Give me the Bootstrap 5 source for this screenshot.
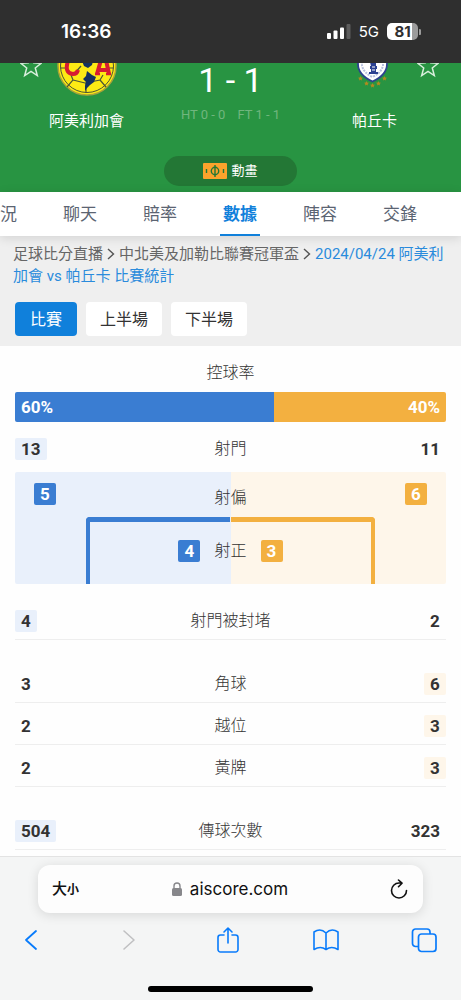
<!DOCTYPE html>
<html lang="zh-Hant">
<head>
<meta charset="utf-8">
<meta name="viewport" content="width=device-width, initial-scale=1">
<title>AiScore</title>
<link href="https://cdn.jsdelivr.net/npm/bootstrap@5.3.0/dist/css/bootstrap.min.css" rel="stylesheet">
<style>
  :root { --home: #3a7dd2; --away: #f3b040; --home-soft: #e9f0fb; --away-soft: #fef6ea; --link: #1080db; }
  body { font-family: Roboto, "Noto Sans CJK TC", sans-serif; font-size: 16px; line-height: 22px; color: #333; background: #fefefe; }
  svg { display: block; flex: none; }
  .ios { font-family: Inter, "Noto Sans CJK TC", sans-serif; }

  .status-bar { height: 63px; background: #2f2f2f; color: #fff; padding: 0 40px 0 61px; }
  .clock { font-size: 19px; font-weight: 600; }
  .network { font-size: 15px; }
  .battery { width: 31px; height: 17px; border-radius: 5px; background: linear-gradient(90deg, #fff 81%, #9b9b9b 81%); color: #2f2f2f; font-size: 15px; line-height: 17px; font-weight: 700; }

  .match-head { background: #289442; color: #fff; padding-bottom: 6px; }
  .side { flex: 1 1 0; font-size: 15px; }
  .crest-row { display: grid; grid-template-columns: 1fr 60px 1fr; height: 47px; }
  .crest-row .star { justify-self: end; margin-right: 15px; }
  .crest-row .star.right { justify-self: start; margin: 0 0 0 12px; }
  .middle { width: 115px; }
  .score { font-size: 34px; line-height: 34px; font-weight: 400; }
  .periods { font-size: 13px; line-height: 16px; color: #70b67e; margin-top: 10px; }
  .anim { width: 133px; height: 30px; border-radius: 15px; border: 0; background: #237735; color: #fff; font-size: 13px; margin-top: 24px; }

  .tab-strip { height: 44px; background: #fff; box-shadow: 0 2px 10px rgba(0,0,0,.12); overflow: hidden; font-size: 17px; position: relative; z-index: 1; }
  .tab-strip a { flex: 0 0 80px; line-height: 45px; text-align: center; text-decoration: none; color: #5b6472; position: relative; }
  .tab-strip a.first { flex-basis: 40px; text-align: left; }
  .tab-strip a.current { color: var(--link); font-weight: 700; }
  .tab-strip a.current::after { content: ""; position: absolute; left: 20px; right: 20px; bottom: 0; height: 2px; background: var(--link); }

  .filters { background: #efefef; padding: 7px 13px 10px; }
  .crumbs { font-size: 15px; line-height: 22px; color: #666; margin-bottom: 15px; }
  .crumbs a { color: inherit; text-decoration: none; }
  .crumbs a.here { color: #2a8bdc; }
  .crumbs svg { display: inline-block; margin: 0 4px; vertical-align: -1px; }
  .filter-row { gap: 9px; padding-left: 2px; }
  .filters .btn { --bs-btn-border-radius: 4px; --bs-btn-border-width: 0; --bs-btn-bg: #fff; --bs-btn-color: #333; height: 34px; padding: 2px 15px 0; font-size: 16px; line-height: 22px; }
  .filters .btn:not(.active) { padding: 2px 14px 0; }
  .filters .btn.active { --bs-btn-active-bg: var(--link); --bs-btn-active-color: #fff; }

  .stats { padding: 16px 15px 0; }
  .stat-name { font-weight: 300; }
  .possession { height: 30px; border-radius: 2px; overflow: hidden; color: #fff; font-size: 17px; font-weight: 700; line-height: 30px; margin: 8px 0 4px; }
  .possession > div { padding: 0 6px; }
  .bg-home { background: var(--home); }
  .bg-away { background: var(--away); }
  .stat { display: grid; grid-template-columns: 1fr auto 1fr; padding: 12px 0 7px; border-bottom: 1px solid #eee; }
  .stat.plain { border-color: transparent; }
  .stat.gap-after { margin-bottom: 21px; }
  .num { font-size: 17px; font-weight: 700; line-height: 23px; height: 22px; min-width: 22px; padding: 0 6px; border-radius: 2px; justify-self: start; text-align: center; }
  .num.r { justify-self: end; }
  .num.h { background: var(--home-soft); }
  .num.a { background: var(--away-soft); }
  .num.solid { color: #fff; }
  .pitch { height: 112px; border-radius: 2px; margin: 4px 0 14px; background: linear-gradient(90deg, var(--home-soft) 50%, var(--away-soft) 50%); }
  .wide { display: grid; grid-template-columns: 1fr auto 1fr; height: 45px; padding: 11px 19px 0; }
  .wide > span { padding-top: 4px; }
  .goal { width: 67%; height: 67px; margin: 0 auto; position: relative; gap: 14px; }
  .goal::before, .goal::after { content: ""; position: absolute; top: 0; bottom: 0; width: 50%; border: 0 solid var(--home); border-top-width: 5px; }
  .goal::before { left: 0; border-left-width: 4px; border-top-left-radius: 4px; }
  .goal::after { right: 0; border-color: var(--away); border-right-width: 4px; border-top-right-radius: 4px; }

  .browser-bar { background: #f4f5f5; border-top: 1px solid #e3e3e3; padding: 8px 0; height: 144px; color: #111; z-index: 2; }
  .address { margin: 0 38px; height: 48px; border-radius: 12px; background: #fdfdfd; box-shadow: 0 2px 12px rgba(0,0,0,.12); padding: 0 15px 0 14px; display: grid; grid-template-columns: 1fr auto 1fr; align-items: center; }
  .browser-bar button { border: 0; padding: 0; background: none; color: #087bfb; }
  .browser-bar .address button { color: #111; }
  .size-btn { font-size: 15px; font-weight: 500; }
  .size-btn small { font-size: 12px; font-weight: 700; }
  .host { font-size: 17px; }
  .tools { padding: 13px 23px 0 17px; }
  .tools button { width: 28px; }
  .tools svg { margin: 0 auto; }
  .home-line { width: 165px; height: 6px; border-radius: 3px; background: #000; margin: 32px auto 0; }
</style>
</head>
<body>
<div class="d-flex flex-column min-vh-100">

  <div class="status-bar ios d-flex align-items-center justify-content-between">
    <span class="clock">16:36</span>
    <div class="d-flex align-items-center">
      <svg width="24" height="15" viewBox="0 0 24 15" fill="#fff"><rect x="0" y="9" width="4" height="6" rx="1"/><rect x="6.500" y="6.500" width="4" height="8.500" rx="1"/><rect x="13" y="3.500" width="4" height="11.500" rx="1"/><rect x="19.500" y="0" width="4" height="15" rx="1" fill="#5d5d5d"/></svg>
      <span class="network ms-2 me-2">5G</span>
      <span class="battery text-center">81</span>
      <svg width="3" height="6" viewBox="0 0 3 6"><path d="M1 0a3 3 0 0 1 0 6z" fill="#9b9b9b"/></svg>
    </div>
  </div>

  <header class="match-head">
    <div class="d-flex justify-content-center">
      <div class="side text-center">
        <div class="crest-row">
          <svg class="star" width="22" height="15" viewBox="0 9 22 15" fill="none" stroke="#d9efdd" stroke-width="1.500"><path d="M11 1.500l2.700 7.400 7.500.4-5.900 4.700 2 7.500-6.300-4.200-6.300 4.200 2-7.500L.8 9.300l7.500-.4z"/></svg>
          <svg width="60" height="33" viewBox="0 27 60 33">
            <circle cx="30" cy="30" r="29" fill="#fdea14" stroke="#a9a33a" stroke-width="1.500"/>
            <circle cx="30" cy="30" r="26.500" fill="none" stroke="#4b5537"/>
            <path d="M3 32h6M57 32h-6M10 51l6-7-2-5M16 44l12 3 15-3 3-5M43 44l6 7M29 47v10M18 37l6-7" fill="none" stroke="#4b5537" stroke-width="1.200"/>
            <path d="M25 25h11l-1 4-4 3-4-2zM30 35l5 4 4 2-2 5-4 3-3 3-2 3 0-5 1-4-3-3 3-3z" fill="#15315f"/>
            <path d="M11 25q-4 12 5 13 4 0 5-4M40 38l4-14h5l3 14M42 34h9" fill="none" stroke="#d71b32" stroke-width="4"/>
            <path d="M38 38h5M49 38h5" stroke="#d71b32" stroke-width="2.500"/>
          </svg>
        </div>
        <div>阿美利加會</div>
      </div>
      <div class="middle text-center text-nowrap">
        <div class="score">1 - 1</div>
        <div class="periods d-flex justify-content-center gap-2"><span>HT 0 - 0</span> <span class="ps-1">FT 1 - 1</span></div>
      </div>
      <div class="side text-center">
        <div class="crest-row">
          <span></span>
          <svg width="60" height="33" viewBox="0 27 60 33">
            <path d="M13 16h29v12q0 11-14.500 17.500Q13 39 13 28z" fill="#fff" stroke="#2d428e" stroke-width="1.800"/>
            <path d="M17 16h21v14q-2 7-10.500 11-8.500-4-10.500-11z" fill="none" stroke="#b9c2df" stroke-width="2" stroke-dasharray="2 1"/>
            <path d="M25 26h6v4h1v3h-1v3h2v2h-9v-2h2v-3h-1v-3h1z" fill="#2b4191"/><path d="M27 31h3M27 34h3" stroke="#fff"/>
            <g fill="#b28a20"><path id="gold" d="M27.500 47l.7 1.500 1.700.2-1.200 1.200.3 1.700-1.500-.8-1.500.8.3-1.700-1.200-1.200 1.700-.2z"/><use href="#gold" x="-6" y="-2"/><use href="#gold" x="-12" y="-7"/><use href="#gold" x="6" y="-2"/><use href="#gold" x="12" y="-7"/></g>
          </svg>
          <svg class="star right" width="22" height="15" viewBox="0 9 22 15" fill="none" stroke="#d9efdd" stroke-width="1.500"><path d="M11 1.500l2.700 7.400 7.500.4-5.900 4.700 2 7.500-6.300-4.200-6.300 4.200 2-7.500L.8 9.300l7.500-.4z"/></svg>
        </div>
        <div>帕丘卡</div>
      </div>
    </div>
    <button type="button" class="anim d-flex align-items-center justify-content-center mx-auto gap-1">
      <svg width="24" height="16" viewBox="0 0 24 16"><rect width="24" height="16" rx="1" fill="#fba32c"/><g fill="none" stroke="#237735" stroke-width="1.400"><circle cx="12" cy="8" r="3.700"/><path d="M12 2v12M3.500 6v4M20.500 6v4"/></g></svg>
      動畫
    </button>
  </header>

  <nav class="tab-strip d-flex text-nowrap">
    <a href="#" class="first">況</a>
    <a href="#">聊天</a>
    <a href="#">賠率</a>
    <a href="#" class="current">數據</a>
    <a href="#">陣容</a>
    <a href="#">交鋒</a>
  </nav>

  <section class="filters">
    <nav class="crumbs"><a href="#">足球比分直播</a><svg width="8" height="12" viewBox="0 0 8 12" fill="none" stroke="#555" stroke-width="1.400"><path d="M1 1l5.500 5L1 11"/></svg><a href="#">中北美及加勒比聯賽冠軍盃</a><svg width="8" height="12" viewBox="0 0 8 12" fill="none" stroke="#555" stroke-width="1.400"><path d="M1 1l5.500 5L1 11"/></svg><a href="#" class="here">2024/04/24 阿美利加會 vs 帕丘卡 比賽統計</a></nav>
    <div class="filter-row d-flex">
      <button type="button" class="btn active">比賽</button>
      <button type="button" class="btn">上半場</button>
      <button type="button" class="btn">下半場</button>
    </div>
  </section>

  <main class="stats">
    <div class="stat-name text-center">控球率</div>
    <div class="possession d-flex">
      <div class="bg-home" style="width:60%">60%</div>
      <div class="bg-away text-end" style="width:40%">40%</div>
    </div>
    <div class="stat plain"><div class="num h">13</div><span class="stat-name">射門</span><div class="num r">11</div></div>
    <div class="pitch">
      <div class="wide"><div class="num solid bg-home">5</div><span class="stat-name">射偏</span><div class="num r solid bg-away">6</div></div>
      <div class="goal d-flex align-items-center justify-content-center">
        <div class="num solid bg-home">4</div><span class="stat-name">射正</span><div class="num solid bg-away">3</div>
      </div>
    </div>
    <div class="stat gap-after"><div class="num h">4</div><span class="stat-name">射門被封堵</span><div class="num r">2</div></div>
    <div class="stat"><div class="num">3</div><span class="stat-name">角球</span><div class="num r a">6</div></div>
    <div class="stat"><div class="num">2</div><span class="stat-name">越位</span><div class="num r a">3</div></div>
    <div class="stat gap-after"><div class="num">2</div><span class="stat-name">黃牌</span><div class="num r a">3</div></div>
    <div class="stat"><div class="num h">504</div><span class="stat-name">傳球次數</span><div class="num r">323</div></div>
  </main>

  <footer class="browser-bar ios mt-auto sticky-bottom">
    <div class="address">
      <button type="button" class="size-btn text-start">大<small>小</small></button>
      <button type="button" class="host d-flex align-items-center">
        <svg class="me-2" width="10" height="14" viewBox="0 0 10 14"><rect y="6" width="10" height="8" rx="1.500" fill="#87878b"/><path d="M2 6.500V4a3 3 0 0 1 6 0v2.500" fill="none" stroke="#87878b" stroke-width="1.400"/></svg>aiscore.com
      </button>
      <button type="button" class="ms-auto" aria-label="重新載入">
        <svg width="18" height="21" viewBox="0 0 18 21" fill="none" stroke="#111" stroke-width="1.600" stroke-linecap="round" stroke-linejoin="round"><path d="M16.500 11.500a7.500 7.500 0 1 1-7.500-7.500h2.500M8.500 1l3.500 3.200-3.500 3.500"/></svg>
      </button>
    </div>
    <div class="tools d-flex justify-content-between align-items-center">
      <button type="button" aria-label="上一頁"><svg width="14" height="28" viewBox="0 0 14 28" fill="none" stroke="#087bfb" stroke-width="1.800" stroke-linecap="round" stroke-linejoin="round"><path d="M12 5L2 14l10 9"/></svg></button>
      <button type="button" aria-label="下一頁"><svg width="14" height="28" viewBox="0 0 14 28" fill="none" stroke="#c0c0c2" stroke-width="1.600" stroke-linecap="round" stroke-linejoin="round"><path d="M2 5l10 9-10 9"/></svg></button>
      <button type="button" aria-label="分享"><svg width="24" height="28" viewBox="0 0 24 28" fill="none" stroke="#087bfb" stroke-width="1.600" stroke-linecap="round" stroke-linejoin="round"><path d="M8 9H4.500A2.500 2.500 0 0 0 2 11.500v12A2.500 2.500 0 0 0 4.500 26h15a2.500 2.500 0 0 0 2.500-2.500v-12A2.500 2.500 0 0 0 19.500 9H16M12 17V2M8 6l4-4 4 4"/></svg></button>
      <button type="button" aria-label="書籤"><svg width="28" height="28" viewBox="0 0 28 28" fill="none" stroke="#087bfb" stroke-width="1.600" stroke-linejoin="round"><path d="M14 7Q8.500 1.500 2 6v17.500q6.500-4 12 0 5.500-4 12 0V6Q19.500 1.500 14 7zM14 7v16.500"/></svg></button>
      <button type="button" aria-label="分頁"><svg width="26" height="28" viewBox="0 0 26 28" fill="none" stroke="#087bfb" stroke-width="1.700" stroke-linejoin="round"><rect x="7.500" y="8" width="17.500" height="17.500" rx="3"/><path d="M7.500 20.500H4.500a3 3 0 0 1-3-3V6a3 3 0 0 1 3-3H16a3 3 0 0 1 3 3v2"/></svg></button>
    </div>
    <div class="home-line"></div>
  </footer>
</div>
<script src="https://cdn.jsdelivr.net/npm/bootstrap@5.3.0/dist/js/bootstrap.bundle.min.js"></script>
</body>
</html>
